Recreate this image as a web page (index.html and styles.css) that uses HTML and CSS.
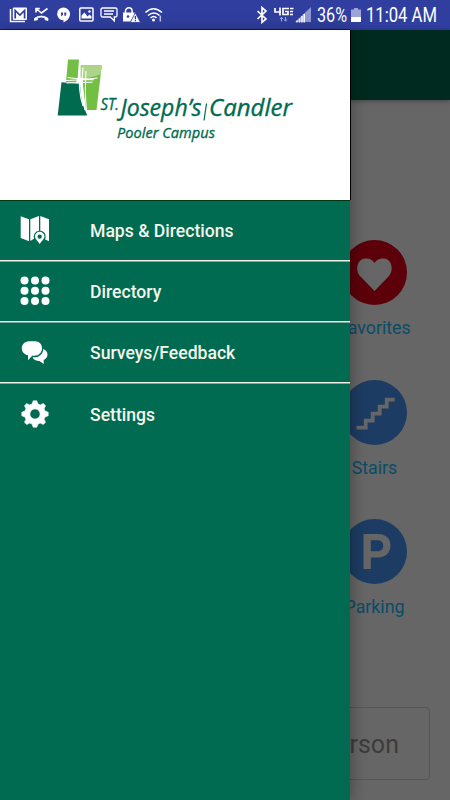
FILE: index.html
```html
<!DOCTYPE html>
<html lang="en">
<head>
<meta charset="utf-8">
<title>St. Joseph's/Candler</title>
<link rel="stylesheet" href="styles.css">
</head>
<body>
<div class="screen">
  <header class="status">
    <svg class="status-left" width="170" height="30" viewBox="0 0 170 30" fill="none" stroke="#fff" stroke-width="1.5">
      <path d="M10.500 9v12.500H25"/>
      <rect x="12.800" y="7.500" width="14.200" height="12.500" rx="1" fill="#fff" stroke="none"/>
      <path d="M15.200 18.500v-8l4.700 4.500 4.700-4.500v8" stroke="#303f9f" stroke-width="1.700"/>
      <path d="M36 8v4.500M35.300 8.500h4.500M36 8.500l5.500 4.500L47.500 8.500" stroke-width="1.600"/>
      <path d="M34.500 20.500v-2.200q7-4.500 13.500 0v2.200l-3-.8v-2q-4-1.200-7.500 0v2z" fill="#fff" stroke-width=".8"/>
      <path d="M63.500 7.500a6.500 6.500 0 0 1 6.500 6.500c0 4-3 7-6.500 8.500v-2.200a6.400 6.400 0 0 1 0-12.800z" fill="#fff" stroke="none"/>
      <path d="M61 12.500h2v2l-1 1.500h-.8v-1.400H61zM64.300 12.500h2v2l-1 1.500h-.8v-1.400h-.2z" fill="#303f9f" stroke="none"/>
      <rect x="79.800" y="8" width="13.200" height="13" rx="1"/>
      <path d="M81.500 18.500v-3l3-3 3 4 2-2 2 2v2z" fill="#fff" stroke="none"/><circle cx="89.500" cy="11.500" r="1.200" fill="#fff" stroke="none"/>
      <path d="M102.500 8h13q1.500 0 1.500 1.500v6q0 1.500-1.500 1.500h-1.200v4l-4-4h-7.800q-1.500 0-1.500-1.500v-6q0-1.500 1.500-1.500zM104 11h10M104 14h9" stroke-width="1.300"/>
      <path d="M125.500 13v-2a3.300 3.300 0 0 1 6.600 0v2"/>
      <path d="M123 12.500h11.500v3L130.500 21.500H123z" fill="#fff" stroke="none"/><circle cx="128" cy="16.500" r="1.300" fill="#303f9f" stroke="none"/>
      <path d="M135.300 12.800l5.200 9.700h-10.300z" fill="#fff" stroke="#303f9f" stroke-width=".8"/><path d="M135.400 16v3.200M135.400 20v1.200" stroke="#303f9f" stroke-width="1.300"/>
      <path d="M145.500 12.500q8-7.500 16.500 0M148 15.500q6-5 11.500 0M150.500 18q3.500-3 6 0" stroke-width="1.600"/>
      <circle cx="153.500" cy="20" r="1.500" fill="#fff" stroke="none"/><path d="M160.300 15.500v6" stroke="#bcc3ee" stroke-width="1.500"/>
    </svg>
    <svg class="status-right" width="200" height="30" viewBox="0 0 200 30" fill="none" stroke="#fff">
      <path d="M7.500 11l8.500 8-4 3.500v-15l4 3.500-8.500 8" stroke-width="1.700"/>
      <path d="M25 8v4h6M30 7.500v8M39 8.500h-6v6h5v-3h-3" stroke-width="1.700"/>
      <path d="M40 8.500h3.500M40 11.500h3M40 14.500h3" stroke-width="1.500"/>
      <path d="M31.500 17.500v4M30 19l1.500-1.700L33 19M35.500 17v4M34 19.500l1.500 1.700 1.500-1.700" stroke="#a3abdc" stroke-width="1"/>
      <path d="M61 7v15H45z" fill="#8f98d2" stroke="none"/>
      <path d="M47 20.500v2M49.500 18.500v4M52 16v6.500M54.200 14v8.500" stroke-width="1.500"/>
      <text class="status-text" x="67" y="22" textLength="30" lengthAdjust="spacingAndGlyphs">36%</text>
      <path d="M104 8h4v1.500h3V17h-10V9.500h3z" fill="#9da5d8" stroke="none"/><path d="M101 17h10v5h-10z" fill="#fff" stroke="none"/>
      <text class="status-text" x="116" y="22" textLength="71" lengthAdjust="spacingAndGlyphs">11:04 AM</text>
    </svg>
  </header>
  <div class="body">
    <aside class="drawer">
      <div class="brand">
        <svg width="350" height="170" viewBox="0 30 350 170">
          <path d="M68 59.500h11l-1.300 18-2 5.500-9.700-1z" fill="#72bf44"/>
          <path d="M80.500 65.300h21.300L96.500 110H86z" fill="#72bf44"/>
          <path d="M80.500 65.300h21.300l-1.200 9q-8 3.500-20 4z" fill="#acd58a"/>
          <path d="M61.500 82.200q10 .8 18.500 1.500 0 17 7.300 31.800H57.700z" fill="#006b4f"/>
          <path d="M80 65Q77.500 90 83 106M83 67.500Q80.500 93 85 110M86 71Q84.500 92 86.500 110M67.500 77.500q14 2.500 30 .5M66 80.500q15-1 28-.7M66.500 83q13-.5 26-.8" fill="none" stroke="#fff" stroke-width="1.100"/>
          <g class="logo-text">
            <text x="100.500" y="110" font-size="15.500" textLength="18.500" lengthAdjust="spacingAndGlyphs">ST.</text>
            <text x="120.500" y="116" font-size="23.500" textLength="81" lengthAdjust="spacingAndGlyphs">Joseph’s</text>
            <text x="209" y="116" font-size="23.500" textLength="83" lengthAdjust="spacingAndGlyphs">Candler</text>
            <text x="117" y="138" font-size="15" textLength="98" lengthAdjust="spacingAndGlyphs">Pooler Campus</text>
          </g>
          <path d="M206.500 103.500l-2.500 17" stroke="#006b4f" stroke-width="1.200"/>
        </svg>
      </div>
      <nav class="menu">
        <a class="item">
          <svg class="icon" viewBox="0 0 30 30" fill="#fff"><path d="M.7 1.300L9 4.200v22L.7 23zM10.300 4.200L19 1v14.800a6 6 0 0 0-5 8L10.300 26zM20.300 1L29 4.200v22l-3.800-1.700c1.500-5-1-8.400-4.900-8.700z"/><path fill-rule="evenodd" d="M19.700 16.800a4.800 4.800 0 0 1 4.800 4.800c0 2.500-3.300 5-4.800 7.400-1.500-2.400-4.800-4.900-4.800-7.400a4.800 4.800 0 0 1 4.800-4.800zm0 2.600a2.200 2.200 0 1 0 0 4.400 2.200 2.200 0 0 0 0-4.400z"/></svg>
          <span>Maps &amp; Directions</span>
        </a>
        <a class="item">
          <svg class="icon" viewBox="0 0 30 30" fill="#fff"><circle cx="4.500" cy="4.500" r="4"/><circle cx="15" cy="4.500" r="4"/><circle cx="25.500" cy="4.500" r="4"/><circle cx="4.500" cy="14.700" r="4"/><circle cx="15" cy="14.700" r="4"/><circle cx="25.500" cy="14.700" r="4"/><circle cx="4.500" cy="24.900" r="4"/><circle cx="15" cy="24.900" r="4"/><circle cx="25.500" cy="24.900" r="4"/></svg>
          <span>Directory</span>
        </a>
        <a class="item">
          <svg class="icon" viewBox="0 0 30 30" fill="#fff"><path d="M9 4.200h6c4.500 0 7 3 7 7s-3 7.500-7.500 7.500h-2.300L8 23.200v-5c-4-.7-6.200-3.700-6.200-7s2.700-7 7.200-7z"/><path d="M23.300 12c2.700 1 4.200 3 4.200 5.500 0 2.300-1.500 4.500-3.800 5.500v4L19.500 24c-3.500 0-6-1.200-7-3.800h3.500c4-.5 7-3.700 7.300-8.200z"/></svg>
          <span>Surveys/Feedback</span>
        </a>
        <a class="item">
          <svg class="icon" viewBox="0 0 30 30"><path fill="#fff" stroke="#fff" stroke-width=".6" stroke-linejoin="round" fill-rule="evenodd" d="M13.200 1.800h3.600l1.200 3.200 2.200.9 3.100-1.400 2.200 2.200-1.400 3.100.9 2.200 3.200 1.200v3.600L25 18l-.9 2.200 1.400 3.100-2.200 2.200-3.100-1.400L18 25l-1.200 3.200h-3.600L12 25l-2.200-.9-3.100 1.400-2.200-2.200 1.400-3.100L5 18l-3.200-1.200v-3.600L5 12l.9-2.200-1.400-3.100 2.200-2.200 3.100 1.400L12 5zM15 9.900a5.100 5.100 0 1 0 0 10.200 5.100 5.100 0 0 0 0-10.200z"/></svg>
          <span>Settings</span>
        </a>
      </nav>
    </aside>
    <main class="page">
      <div class="toolbar"></div>
      <div class="tiles">
        <div class="tile">
          <svg width="65" height="65" viewBox="0 0 65 65"><circle cx="32.500" cy="32.500" r="32.500" fill="#5c000a"/><path d="M32.500 51L18.500 36.500C13 31 14.500 19.500 23 18.500c5-.5 8 2 9.500 4.500 1.500-2.500 4.500-5 9.500-4.500 8.500 1 10 12.500 4.500 18z" fill="#666"/></svg>
          <span>Favorites</span>
        </div>
        <div class="tile">
          <svg width="65" height="65" viewBox="0 0 65 65"><circle cx="32.500" cy="32.500" r="32.500" fill="#1d3c63"/><path d="M14.500 47.700h9.200v-7h7v-7h7v-7h7v-7h8" fill="none" stroke="#666" stroke-width="3.800"/></svg>
          <span>Stairs</span>
        </div>
        <div class="tile">
          <svg width="65" height="65" viewBox="0 0 65 65"><circle cx="32.500" cy="32.500" r="32.500" fill="#1d3c63"/><path fill="#666" fill-rule="evenodd" d="M21.500 15H36c8 0 12.500 5 12.500 11.500S44 38.500 36 38.500h-7.200V50h-7.300zm7.300 6.300v11h6.700c4 0 5.700-2.300 5.700-5.500s-1.700-5.500-5.700-5.500z"/></svg>
          <span>Parking</span>
        </div>
      </div>
      <div class="search">rson</div>
    </main>
  </div>
</div>
</body>
</html>
```

FILE: styles.css
```css
* { box-sizing: border-box; }
body {
  margin: 0;
  font-family: Roboto, "Liberation Sans", sans-serif;
}
.screen {
  width: 450px;
  height: 800px;
  display: flex;
  flex-direction: column;
  overflow: hidden;
  background: #666;
}
.status {
  height: 30px;
  flex: none;
  display: flex;
  justify-content: space-between;
  background: linear-gradient(#101080, #101080) 0 29px / 350px 1px no-repeat #303f9f;
}
.status-text {
  fill: #fff;
  stroke: none;
  font-size: 19.500px;
}
.body {
  flex: 1;
  display: flex;
  min-height: 0;
}
.drawer {
  width: 350px;
  flex: none;
  background: #006b50;
  z-index: 1;
  box-shadow: 2px 0 14px rgba(0, 0, 0, .3);
}
.brand {
  height: 170px;
  background: #fff;
  box-shadow: 1px 0 0 #000;
}
.brand svg { display: block; }
.logo-text {
  font-family: "Open Sans", Lato, sans-serif;
  font-style: italic;
  font-weight: 500;
  fill: #006b4f;
  stroke: #006b4f;
  stroke-width: .35px;
}
.menu { box-shadow: inset 0 1px 0 #003a10; }
.item {
  height: 61px;
  padding-left: 20px;
  display: flex;
  align-items: center;
  gap: 40px;
  color: #f5f5ec;
  font-size: 17.600px;
  font-weight: 500;
  line-height: 24px;
}
.item span { padding-top: 2px; }
.item:not(:last-child) {
  border-bottom: 1px solid #f4efe6;
  box-shadow: 0 1px 0 #80a898;
}
.icon {
  width: 30px;
  height: 30px;
}
.page {
  width: 100px;
  display: flex;
  flex-direction: column;
}
.toolbar {
  height: 70px;
  flex: none;
  background: #002a1f;
  box-shadow: 0 1px 5px rgba(0, 0, 0, .35);
}
.tiles {
  margin-top: 140px;
  margin-left: -25.500px;
  width: 100px;
  display: flex;
  flex-direction: column;
  gap: 39.500px;
}
.tile {
  height: 100px;
  display: flex;
  flex-direction: column;
  align-items: center;
  gap: 12px;
  color: #0a4c66;
  font-size: 17.800px;
  line-height: 22px;
}
.tile svg { flex: none; }
.search {
  width: 100px;
  height: 73px;
  margin: 88px 0 0 -20px;
  padding-left: 18.500px;
  border: 1px solid #555;
  border-radius: 4px;
  color: #3c3c3c;
  font-size: 25px;
  line-height: 74px;
}
```
